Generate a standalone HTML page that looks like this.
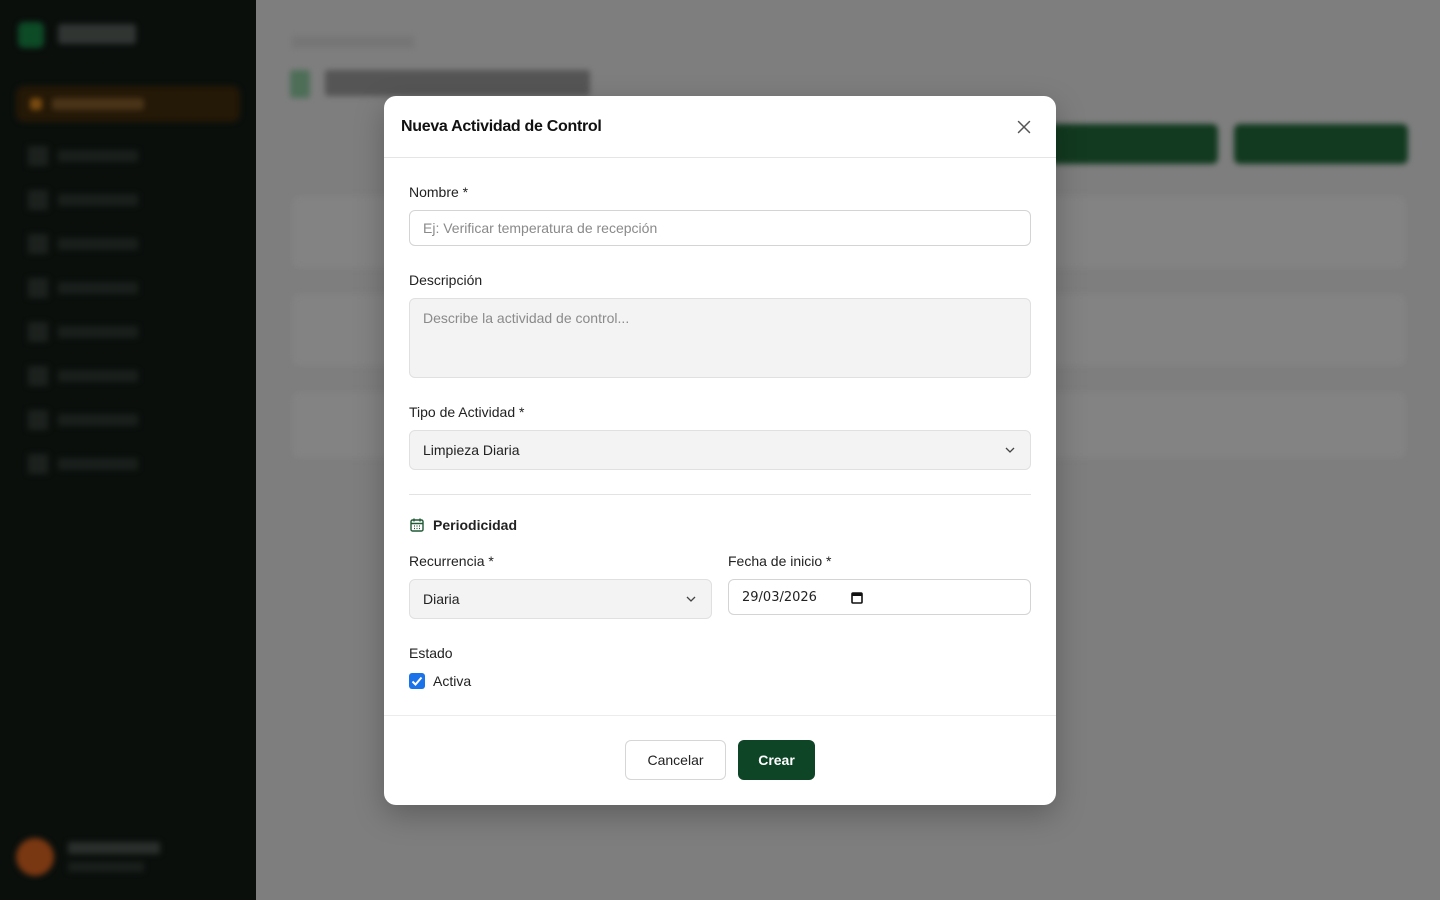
<!DOCTYPE html>
<html><head><meta charset="utf-8"><style>
*{box-sizing:border-box;margin:0;padding:0}
body{width:1440px;height:900px;overflow:hidden;font-family:"Liberation Sans",sans-serif;background:#7e7e7e;position:relative}
.sb{position:absolute;left:0;top:0;width:256px;height:900px;background:#0a0f0c}
.blur{filter:blur(3px)}
.abs{position:absolute}
.modal{position:absolute;left:384px;top:96px;width:672px;height:709px;background:#fff;border-radius:12px;box-shadow:0 10px 30px rgba(0,0,0,.25)}
.hd{height:62px;border-bottom:1px solid #e5e5e5;padding:0 17px;display:flex;align-items:center;justify-content:space-between}
.hd h2{font-size:16px;font-weight:700;color:#111;letter-spacing:-.3px}
label,.lbl{position:absolute;left:25px;font-size:14px;color:#222}
.inp{position:absolute;left:25px;width:622px;border:1px solid #d4d4d4;border-radius:6px;font-size:14px;padding-left:13px;display:flex;align-items:center;color:#222}
.gray{background:#f3f3f3;border-color:#e0e0e0}
.ph{color:#8a8a8a}
.chev{position:absolute;right:14px;top:50%;margin-top:-4px}
.btn{position:absolute;top:644px;height:40px;border-radius:6px;font-size:14px;display:flex;align-items:center;justify-content:center}
</style></head><body>
<div class="sb">
 <div class="blur">
 <div class="abs" style="left:18px;top:22px;width:26px;height:26px;border-radius:6px;background:#0d4a26"></div>
 <div class="abs" style="left:58px;top:24px;width:78px;height:20px;background:#4a4f4c;border-radius:3px;opacity:.6"></div>
 <div class="abs" style="left:16px;top:86px;width:224px;height:36px;border-radius:8px;background:#241806"></div>
 <div class="abs" style="left:30px;top:98px;width:12px;height:12px;background:#7a4a10;border-radius:3px"></div>
 <div class="abs" style="left:52px;top:98px;width:92px;height:12px;background:#4a3418;border-radius:3px"></div>
 <div class="abs" style="left:28px;top:146px;width:20px;height:340px;background:repeating-linear-gradient(#1c211e 0 20px,transparent 20px 44px)"></div>
 <div class="abs" style="left:58px;top:150px;width:80px;height:340px;background:repeating-linear-gradient(#1a1f1c 0 12px,transparent 12px 44px)"></div>
 <div class="abs" style="left:16px;top:838px;width:38px;height:38px;border-radius:50%;background:#7a3812"></div>
 <div class="abs" style="left:68px;top:842px;width:92px;height:12px;background:#2a2f2c"></div>
 <div class="abs" style="left:68px;top:862px;width:76px;height:10px;background:#1a1f1c"></div>
 </div>
</div>
<div class="blur">
 <div class="abs" style="left:292px;top:36px;width:122px;height:12px;background:#767676"></div>
 <div class="abs" style="left:290px;top:70px;width:20px;height:28px;background:#4e6e58;border-radius:3px"></div>
 <div class="abs" style="left:325px;top:70px;width:265px;height:26px;background:#444;opacity:.7;border-radius:3px"></div>
 <div class="abs" style="left:1048px;top:124px;width:170px;height:40px;background:#123a20;border-radius:6px"></div>
 <div class="abs" style="left:1234px;top:124px;width:174px;height:40px;background:#123a20;border-radius:6px"></div>
 <div class="abs" style="left:292px;top:196px;width:1114px;height:72px;background:#838383;border-radius:8px"></div>
 <div class="abs" style="left:292px;top:294px;width:1114px;height:72px;background:#838383;border-radius:8px"></div>
 <div class="abs" style="left:292px;top:392px;width:1114px;height:66px;background:#838383;border-radius:8px"></div>
</div>
<div class="modal">
 <div class="hd"><h2>Nueva Actividad de Control</h2>
  <svg width="14" height="14" viewBox="0 0 14 14" style="margin-right:8px"><path d="M1.5 1.5L12.5 12.5M12.5 1.5L1.5 12.5" stroke="#555" stroke-width="1.5" stroke-linecap="round"/></svg></div>
 <label style="top:88px">Nombre *</label>
 <div class="inp" style="top:114px;height:36px"><span class="ph">Ej: Verificar temperatura de recepción</span></div>
 <label style="top:176px">Descripción</label>
 <div class="inp gray" style="top:202px;height:80px;align-items:flex-start;padding-top:11px"><span class="ph">Describe la actividad de control...</span></div>
 <label style="top:308px">Tipo de Actividad *</label>
 <div class="inp gray" style="top:334px;height:40px">Limpieza Diaria<svg class="chev" width="12" height="8" viewBox="0 0 12 8"><path d="M2 2l4 4 4-4" fill="none" stroke="#444" stroke-width="1.3"/></svg></div>
 <div class="abs" style="left:25px;top:398px;width:622px;height:1px;background:#e3e3e3"></div>
 <svg class="abs" style="left:25px;top:421px" width="16" height="16" viewBox="0 0 16 16"><rect x="2" y="3" width="12" height="11" rx="1.5" fill="none" stroke="#1f5a35" stroke-width="1.4"/><path d="M5 1.5v3M11 1.5v3M2 6.5h12" stroke="#1f5a35" stroke-width="1.4"/><path d="M5 9h1M7.5 9h1M10 9h1M5 11.5h1M7.5 11.5h1M10 11.5h1" stroke="#1f5a35" stroke-width="1.2"/></svg>
 <div class="lbl" style="left:49px;top:421px;font-weight:700;color:#222">Periodicidad</div>
 <label style="top:457px">Recurrencia *</label>
 <label style="left:344px;top:457px">Fecha de inicio *</label>
 <div class="inp gray" style="top:483px;width:303px;height:40px">Diaria<svg class="chev" width="12" height="8" viewBox="0 0 12 8"><path d="M2 2l4 4 4-4" fill="none" stroke="#444" stroke-width="1.3"/></svg></div>
 <div class="inp" style="left:344px;top:483px;width:303px;height:36px;font-family:'DejaVu Sans',sans-serif;font-size:13px">29/03/2026
  <svg style="position:absolute;left:122px;top:11px" width="12" height="13" viewBox="0 0 12 13"><rect x="1" y="2" width="10" height="10" rx="1" fill="none" stroke="#111" stroke-width="1.6"/><rect x="1" y="2" width="10" height="3" fill="#111"/></svg></div>
 <label style="top:549px">Estado</label>
 <div class="abs" style="left:25px;top:577px;width:16px;height:16px;border-radius:3px;background:#1a73e8"><svg width="16" height="16" viewBox="0 0 16 16"><path d="M3.5 8.5l3 3 6-7" fill="none" stroke="#fff" stroke-width="2"/></svg></div>
 <div class="lbl" style="left:49px;top:577px">Activa</div>
 <div class="abs" style="left:0;top:619px;width:672px;height:1px;background:#ececec"></div>
 <div class="btn" style="left:241px;width:101px;border:1px solid #d6d6d6;background:#fff;color:#222">Cancelar</div>
 <div class="btn" style="left:354px;width:77px;background:#0d4526;color:#fff;font-weight:700">Crear</div>
</div>
</body></html>
